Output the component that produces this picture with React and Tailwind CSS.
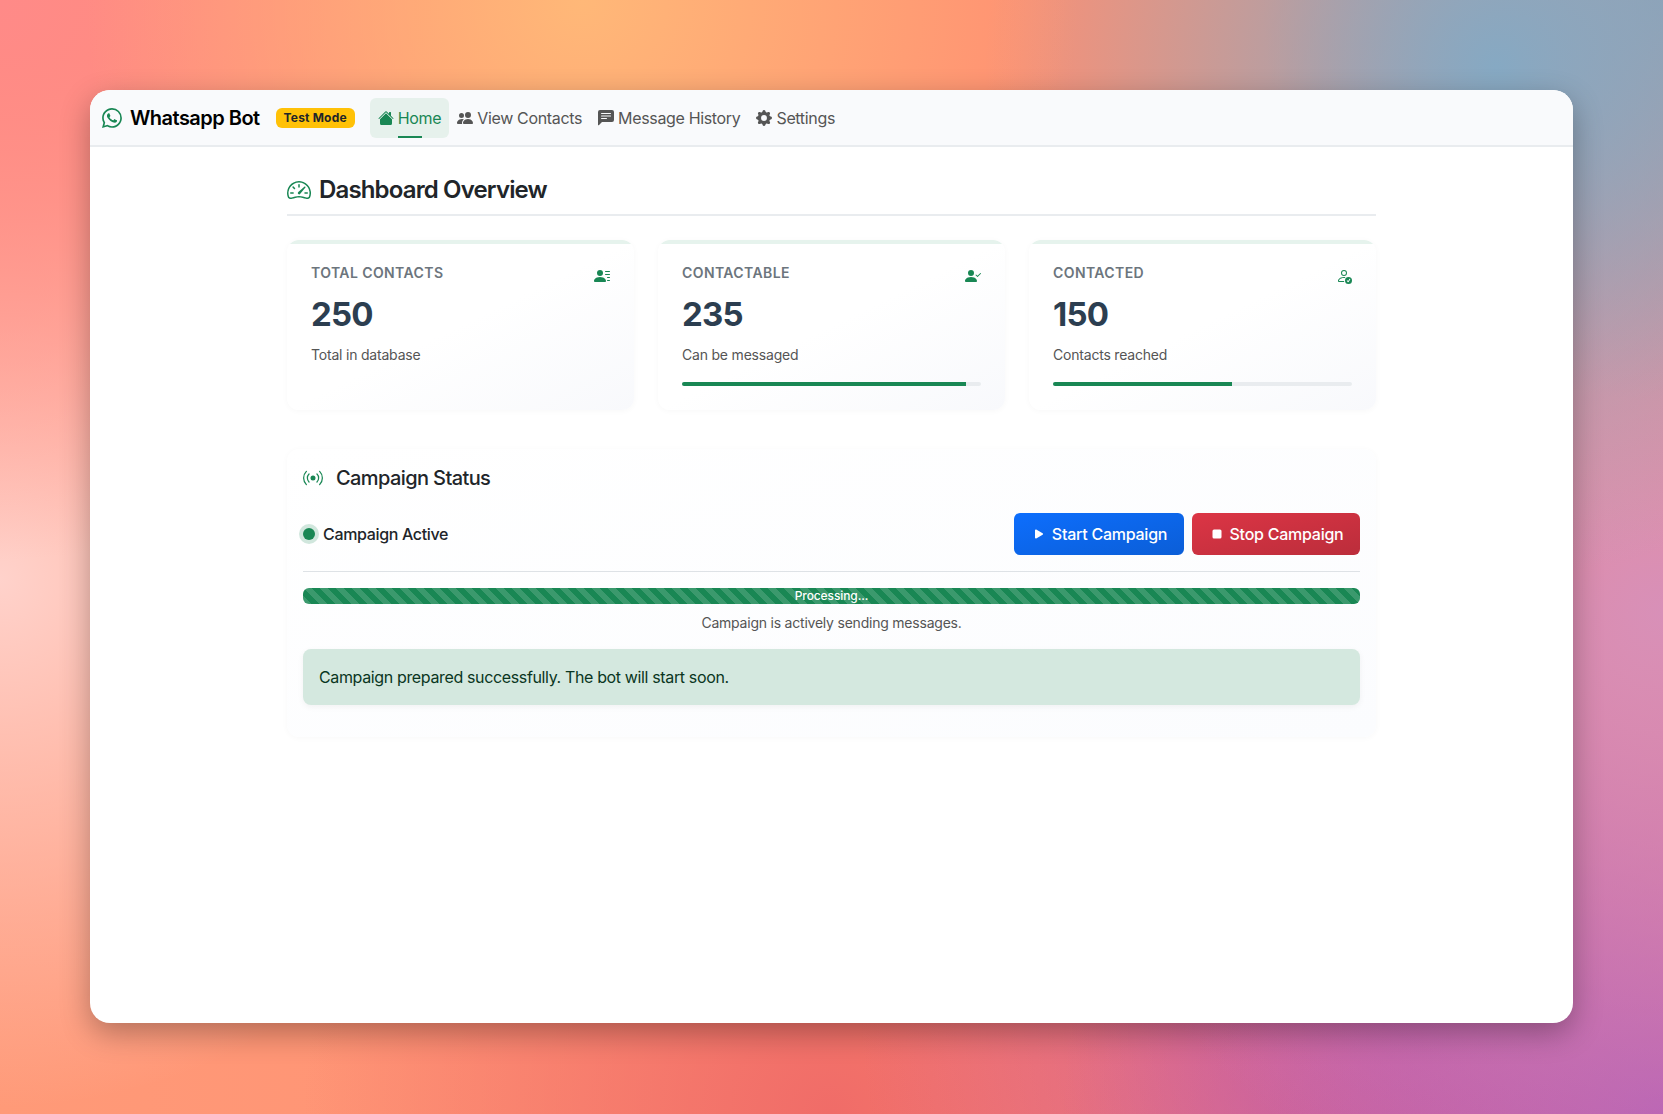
// App.jsx

import React from "react";
import {
  BsWhatsapp,
  BsHouseFill,
  BsPeopleFill,
  BsChatLeftTextFill,
  BsGearFill,
  BsSpeedometer2,
  BsPersonLinesFill,
  BsPersonCheckFill,
  BsPersonCheck,
  BsBroadcast,
  BsPlayFill,
  BsStopFill,
} from "react-icons/bs";

const STATS = [
  { title: "Total Contacts", value: 250, note: "Total in database", Icon: BsPersonLinesFill },
  { title: "Contactable", value: 235, note: "Can be messaged", Icon: BsPersonCheckFill, percent: 95 },
  { title: "Contacted", value: 150, note: "Contacts reached", Icon: BsPersonCheck, percent: 60 },
];

function NavLink({ Icon, label, active }) {
  if (active) {
    return (
      <a className="relative flex h-10 items-center gap-1 rounded-md bg-[#e6f1ec] px-2 text-[#198754]">
        <Icon className="text-base" />
        {label}
        <span className="absolute bottom-0 left-[28px] h-0.5 w-6 bg-[#198754]" />
      </a>
    );
  }
  return (
    <a className="flex h-10 items-center gap-1 px-2 text-[#555555]">
      <Icon className="text-base" />
      {label}
    </a>
  );
}

function StatCard({ title, value, note, Icon, percent }) {
  return (
    <div className="h-[170px] overflow-hidden rounded-xl bg-gradient-to-br from-white via-white to-[#f8f9fc] shadow-[0_1px_6px_rgba(0,0,0,0.03)]">
      <div className="h-1 bg-[#e6f3ed]" />
      <div className="px-6 pt-[18px]">
        <div className="flex h-[21px] items-start justify-between">
          <div className="text-sm leading-[21px] font-semibold tracking-[0.4px] text-[#6c757d] uppercase">
            {title}
          </div>
          <Icon className="mt-[6px] text-base text-[#198754]" />
        </div>
        <div className="mt-[7px] text-[33px] leading-[48px] font-bold tracking-[-0.8px] text-[#2c3e50]">
          {value}
        </div>
        <div className="mt-[6px] text-sm leading-[21px] tracking-[-0.2px] text-[#555555]">{note}</div>
        {percent && (
          <div className="mt-[17px] h-1 overflow-hidden rounded-sm bg-[#e9ecef]">
            <div className="h-full bg-[#198754]" style={{ width: `${percent}%` }} />
          </div>
        )}
      </div>
    </div>
  );
}

export default function App() {
  return (
    <div className="min-h-screen bg-[#ff8f72] bg-[radial-gradient(circle_at_35%_0%,#ffb878_0%,transparent_32%),radial-gradient(circle_at_90%_6%,#86a9c3_0%,transparent_28%),radial-gradient(circle_at_100%_0%,#9a9aa8_0%,transparent_20%),radial-gradient(circle_at_0%_0%,#ff8a88_0%,transparent_28%),radial-gradient(circle_at_0%_52%,#ffd2cb_0%,transparent_30%),radial-gradient(circle_at_100%_55%,#d890b8_0%,transparent_36%),radial-gradient(circle_at_100%_100%,#b45cb4_0%,transparent_30%),radial-gradient(circle_at_85%_90%,#cc5a9c_0%,transparent_32%),radial-gradient(circle_at_50%_100%,#f06c68_0%,transparent_38%),radial-gradient(circle_at_0%_100%,#ff9a78_0%,transparent_40%)] p-[90px] [font-family:Inter,sans-serif]">
      <div className="h-[933px] overflow-hidden rounded-[20px] bg-white shadow-[0_10px_30px_rgba(0,0,0,0.3)]">
        {/* Navbar */}
        <nav className="flex h-[57px] items-center border-b-2 border-[#e9ecef] bg-[#f9fafc] pr-3 pl-3">
          <BsWhatsapp className="text-xl text-[#198754]" />
          <span className="ml-2 text-xl font-semibold tracking-[-0.53px] text-black">Whatsapp Bot</span>
          <span className="ml-4 rounded-md bg-[#ffc107] px-2 py-[2px] text-xs leading-4 font-bold tracking-[0.2px] text-[#212529]">
            Test Mode
          </span>
          <div className="ml-[15px] flex text-base tracking-[-0.34px]">
            <NavLink Icon={BsHouseFill} label="Home" active />
            <NavLink Icon={BsPeopleFill} label="View Contacts" />
            <NavLink Icon={BsChatLeftTextFill} label="Message History" />
            <NavLink Icon={BsGearFill} label="Settings" />
          </div>
        </nav>

        <main className="mx-auto w-[1089px]">
          {/* Page title */}
          <div className="mt-[25px] flex items-center gap-2 border-b-2 border-[#e9ecef] pb-[6px]">
            <BsSpeedometer2 className="text-2xl text-[#198754]" />
            <h1 className="text-2xl leading-9 font-semibold tracking-[-0.85px] text-[#212529]">
              Dashboard Overview
            </h1>
          </div>

          {/* Stats */}
          <div className="mt-[24px] grid grid-cols-3 gap-6">
            {STATS.map((stat) => (
              <StatCard key={stat.title} {...stat} />
            ))}
          </div>

          {/* Campaign */}
          <section className="mt-[39px] h-[288px] rounded-xl bg-gradient-to-br from-white to-[#fbfcfe] p-4 shadow-[0_1px_6px_rgba(0,0,0,0.03)]">
            <div className="mt-px flex h-6 items-center gap-[13px]">
              <BsBroadcast className="text-xl text-[#198754]" />
              <h2 className="text-xl font-medium tracking-[-0.6px] text-[#212529]">Campaign Status</h2>
            </div>

            <div className="mt-[23px] flex items-center justify-between border-b border-[#dee2e6] pb-4">
              <div className="flex items-center gap-2">
                <span className="size-3 rounded-full bg-[#198754] shadow-[0_0_0_4px_rgba(25,135,84,0.2)]" />
                <span className="font-medium tracking-[-0.34px] text-[#212529]">Campaign Active</span>
              </div>
              <div className="flex gap-2 tracking-[-0.25px]">
                <button className="flex h-[42px] w-[170px] items-center justify-center gap-[5px] rounded-md bg-gradient-to-br from-[#0d6efd] to-[#0b5ed7] font-medium text-white">
                  <BsPlayFill className="text-base" />
                  Start Campaign
                </button>
                <button className="flex h-[42px] w-[168px] items-center justify-center gap-[5px] rounded-md bg-gradient-to-br from-[#dc3545] to-[#bb2d3b] font-medium text-white">
                  <BsStopFill className="text-base" />
                  Stop Campaign
                </button>
              </div>
            </div>

            <div className="mt-4 flex h-4 items-center justify-center rounded-md bg-[#198754] bg-[linear-gradient(45deg,rgba(255,255,255,0.15)_25%,transparent_25%,transparent_50%,rgba(255,255,255,0.15)_50%,rgba(255,255,255,0.15)_75%,transparent_75%,transparent)] bg-[length:16px_16px] text-xs font-medium tracking-[-0.1px] text-white">
              Processing...
            </div>
            <p className="mt-[8px] text-center text-sm leading-[21px] tracking-[-0.22px] text-[#555555]">
              Campaign is actively sending messages.
            </p>

            <div className="mt-4 rounded-lg bg-[#d4e8df] p-4 leading-6 tracking-[-0.36px] text-[#0a3622] shadow-[0_2px_6px_rgba(0,0,0,0.05)]">
              Campaign prepared successfully. The bot will start soon.
            </div>
          </section>
        </main>
      </div>
    </div>
  );
}
